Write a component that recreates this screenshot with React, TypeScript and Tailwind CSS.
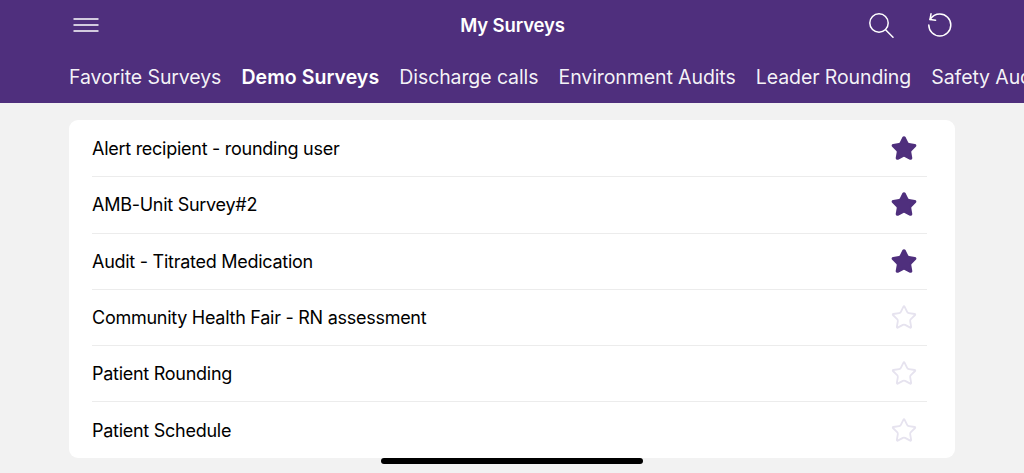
import { Star } from "lucide-react";

const TABS = ["Favorite Surveys", "Demo Surveys", "Discharge calls", "Environment Audits", "Leader Rounding", "Safety Audits"];

const SURVEYS = [
  { name: "Alert recipient - rounding user", fav: true },
  { name: "AMB-Unit Survey#2", fav: true },
  { name: "Audit - Titrated Medication", fav: true },
  { name: "Community Health Fair - RN assessment", fav: false },
  { name: "Patient Rounding", fav: false },
  { name: "Patient Schedule", fav: false },
];

function Header() {
  return (
    <header className="h-[103px] shrink-0 overflow-hidden bg-[#4f2f7d] text-white">
      <div className="grid h-[50px] grid-cols-[1fr_auto_1fr] items-center pl-[73px] pr-[72px]">
        <svg width="26" height="14" viewBox="0 0 26 14" fill="none" stroke="#fff" strokeWidth="1.3">
          <path d="M0.5 1h25M0.5 7h25M0.5 13h25" />
        </svg>
        <div className="pt-[2px] text-[18.5px] font-semibold tracking-[-0.15px]">My Surveys</div>
        <div className="flex items-center justify-end gap-[34px]">
          <svg width="25" height="25" viewBox="0 0 25 25" fill="none" stroke="#fff" strokeWidth="1.5" strokeLinecap="round">
            <circle cx="10" cy="10" r="9.2" />
            <path d="M16.8 17l7.2 7.2" />
          </svg>
          <svg width="24" height="24" viewBox="0 0 24 24" fill="none" stroke="#fff" strokeWidth="1.5" strokeLinecap="round" strokeLinejoin="round">
            <path d="M2 6.5Q5.6 1 11.8 1A11 11 0 1 1 0.8 12" />
            <path d="M3 0.8L2 6.5L7.6 7.2" />
          </svg>
        </div>
      </div>
      <div className="flex gap-[20.2px] whitespace-nowrap pl-[69px] pt-[14px] text-[19.5px] leading-[26px] tracking-[-0.1px]">
        {TABS.map((t) => (
          <span key={t} className={t === "Demo Surveys" ? "font-semibold tracking-[0.05px]" : "font-normal text-white/95"}>
            {t}
          </span>
        ))}
      </div>
    </header>
  );
}

function SurveyRow({ name, fav }: { name: string; fav: boolean }) {
  return (
    <div className="ml-[23px] mr-[28px] flex h-[56.3px] items-center justify-between border-b border-[#ececec] last:h-[55.5px] last:border-b-0">
      <span className="text-[18px] tracking-[-0.27px] text-black">{name}</span>
      <Star
        size={27}
        strokeWidth={fav ? 2 : 1.6}
        strokeLinejoin="round"
        className={fav ? "mr-[10px] translate-x-[0.5px] fill-[#4f2f7d] text-[#4f2f7d]" : "mr-[10px] translate-x-[0.5px] text-[#e6e3ef]"}
      />
    </div>
  );
}

export default function App() {
  return (
    <div className="relative flex h-[473px] w-[1024px] flex-col overflow-hidden bg-[#f2f2f2] font-['Inter',sans-serif]">
      <Header />
      <main className="px-[69px] pt-[17px]">
        <div className="overflow-hidden rounded-[9px] bg-white pt-[1px]">
          {SURVEYS.map((s) => (
            <SurveyRow key={s.name} name={s.name} fav={s.fav} />
          ))}
        </div>
      </main>
      <div className="absolute bottom-[9px] left-[381px] h-[6px] w-[262px] rounded-full bg-black" />
    </div>
  );
}
